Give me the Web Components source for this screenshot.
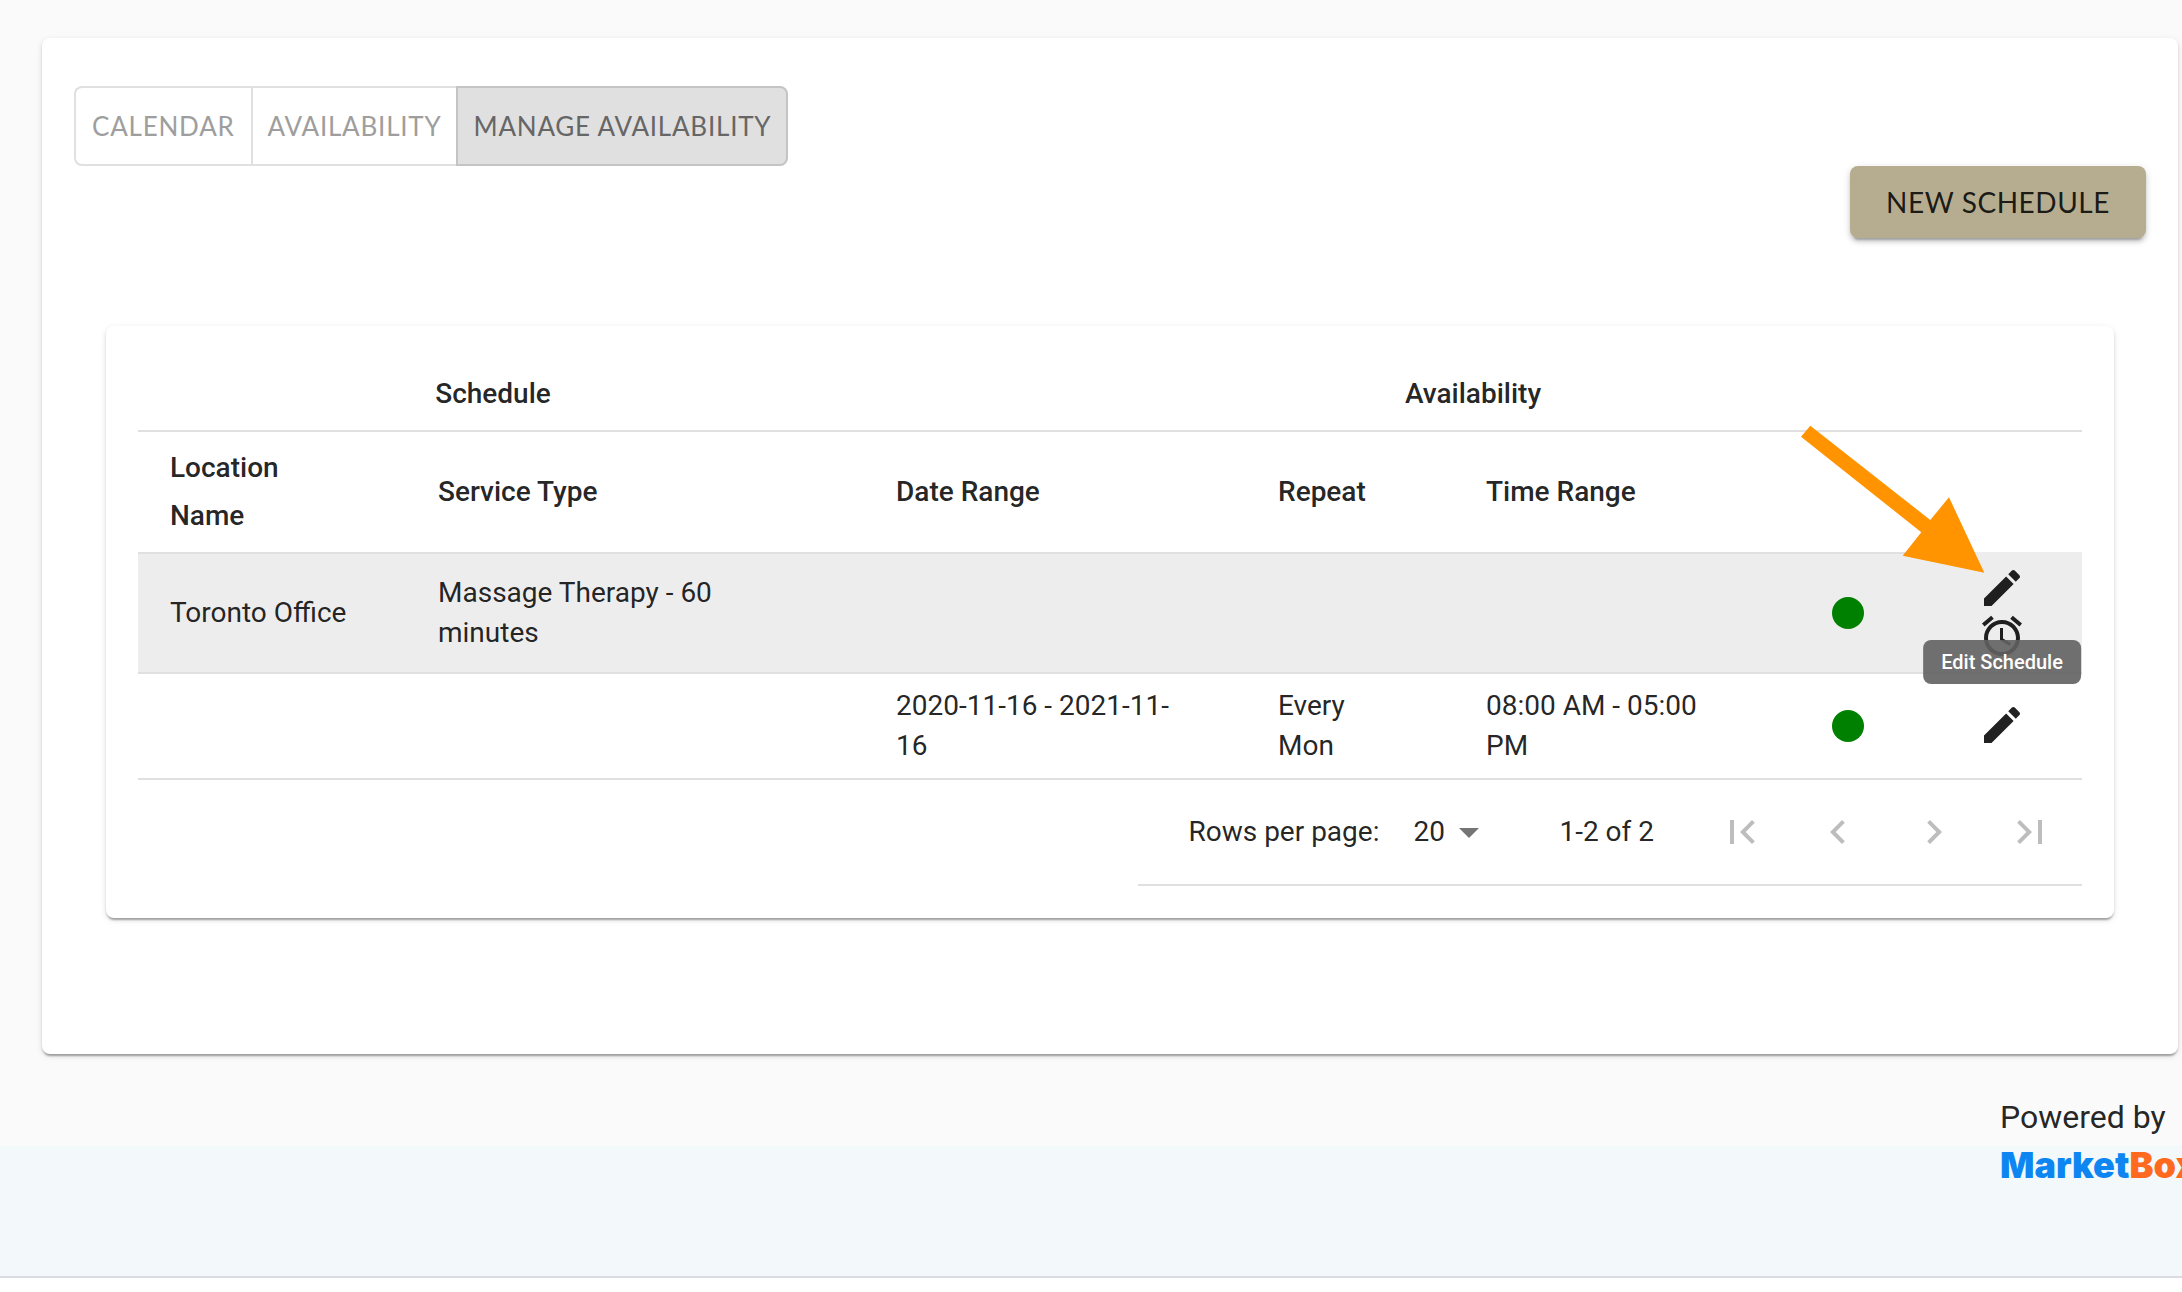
<!DOCTYPE html>
<html lang="en">
<head>
<meta charset="utf-8">
<title>Manage Availability</title>
<style>
  html, body { margin: 0; }
  body {
    min-height: 100vh;
    background: #fff;
    color: rgba(0, 0, 0, 0.87);
    font: 400 28px/40px Roboto, "Liberation Sans", sans-serif;
    overflow-x: hidden;
  }
</style>
</head>
<body>
<schedule-app></schedule-app>

<script>
const define = (name, html, setup) => {
  const template = document.createElement('template');
  template.innerHTML = html;
  customElements.define(name, class extends HTMLElement {
    connectedCallback() {
      if (this.shadowRoot) return;
      const content = template.content.cloneNode(true);
      if (setup) setup.call(this, content);
      this.attachShadow({ mode: 'open' }).append(content);
    }
  });
};

const ICONS = {
  edit: 'M3 17.25V21h3.75L17.81 9.94l-3.75-3.75L3 17.25zM20.71 7.04c.39-.39.39-1.02 0-1.41l-2.34-2.34c-.39-.39-1.02-.39-1.41 0l-1.83 1.83 3.75 3.75 1.83-1.83z',
  alarm: 'M22 5.72l-4.6-3.86-1.29 1.53 4.6 3.86L22 5.72zM7.88 3.39L6.6 1.86 2 5.71l1.29 1.53 4.59-3.85zM12.5 8H11v6l4.75 2.85.75-1.23-4-2.37V8zM12 4c-4.97 0-9 4.03-9 9s4.02 9 9 9c4.97 0 9-4.03 9-9s-4.03-9-9-9zm0 16c-3.87 0-7-3.13-7-7s3.13-7 7-7 7 3.13 7 7-3.13 7-7 7z',
  first: 'M18.41 16.59L13.82 12l4.59-4.59L17 6l-6 6 6 6zM6 6h2v12H6z',
  prev: 'M15.41 7.41L14 6l-6 6 6 6 1.41-1.41L10.83 12z',
  next: 'M10 6L8.59 7.41 13.17 12l-4.58 4.59L10 18l6-6z',
  last: 'M5.59 7.41L10.18 12l-4.59 4.59L7 18l6-6-6-6zM16 6h2v12h-2z',
  drop: 'M7 10l5 5 5-5z'
};

define('app-icon', `
  <style>
    :host { display: block; width: 48px; height: 48px; }
    svg { display: block; width: 100%; height: 100%; fill: currentColor; }
  </style>
  <svg viewBox="0 0 24 24" aria-hidden="true"><path/></svg>
`, function (root) {
  root.querySelector('path').setAttribute('d', ICONS[this.getAttribute('name')]);
});

define('icon-button', `
  <style>
    :host { display: block; }
    button {
      display: block; margin: 0; border: 0; background: none; color: inherit;
      padding: var(--icon-button-padding, 0);
    }
  </style>
  <button type="button"><app-icon></app-icon></button>
`, function (root) {
  root.querySelector('app-icon').setAttribute('name', this.getAttribute('icon'));
  const button = root.querySelector('button');
  button.setAttribute('aria-label', this.getAttribute('label'));
  button.disabled = this.hasAttribute('disabled');
});

define('paper-card', `
  <style>
    :host {
      display: block; padding: 32px; border-radius: 8px; background: #fff;
      box-shadow: 0 4px 2px -2px rgba(0,0,0,.2), 0 2px 2px 0 rgba(0,0,0,.14), 0 2px 6px 0 rgba(0,0,0,.12);
    }
  </style>
  <slot></slot>
`);

define('view-tabs', `
  <style>
    :host { display: flex; }
    slot { display: flex; }
  </style>
  <slot></slot>
`);

define('view-tab', `
  <style>
    :host { display: block; }
    button {
      display: block; height: 80px; margin: 0; padding: 0 15px;
      border: 2px solid #e0e0e0; background: #fff; color: #9e9e9e;
      font: 400 26px/40px Lato, sans-serif; letter-spacing: 0.03em; text-transform: uppercase;
    }
    :host(:not(:last-child)) button { border-right-width: 0; }
    :host(:first-child) button { border-radius: 8px 0 0 8px; padding: 0 16px; }
    :host(:last-child) button { border-radius: 0 8px 8px 0; }
    :host([selected]) button { background: #e0e0e0; border-color: #c4c4c4; color: #666; }
  </style>
  <button type="button"><slot></slot></button>
`, function (root) {
  root.querySelector('button').setAttribute('aria-pressed', this.hasAttribute('selected'));
});

define('raised-button', `
  <style>
    :host { display: block; }
    button {
      display: block; margin: 0; padding: 12px 36px; border: 0; border-radius: 8px;
      background: #b6ad90; color: rgba(0,0,0,.87);
      font: 400 28px/48px Lato, sans-serif; letter-spacing: 0.02em; text-transform: uppercase;
      box-shadow: 0 6px 2px -4px rgba(0,0,0,.2), 0 4px 4px 0 rgba(0,0,0,.14), 0 2px 10px 0 rgba(0,0,0,.12);
    }
  </style>
  <button type="button"><slot></slot></button>
`);

define('status-dot', `
  <style>
    :host { display: block; width: 32px; height: 32px; margin: 0 auto; border-radius: 50%; background: #008000; }
  </style>
`);

define('tool-tip', `
  <style>
    :host {
      display: block; padding: 8px 18px; border-radius: 8px; white-space: nowrap;
      background: rgba(97,97,97,.9); color: #fff; font-size: 20px; line-height: 28px; font-weight: 500;
    }
  </style>
  <slot></slot>
`);

define('pointer-arrow', `
  <style>
    :host { display: block; width: 184px; height: 148px; pointer-events: none; }
    svg { display: block; fill: #ff9400; }
  </style>
  <svg width="184" height="148" viewBox="0 0 184 148" aria-hidden="true">
    <polygon points="9.3,.7 0,11.7 120.3,107.3 101.7,130.7 183.3,147.7 148,72.3 129.3,95"/>
  </svg>
`);

define('schedule-table', `
  <style>
    :host { display: block; }
    table { width: 100%; table-layout: fixed; border-collapse: separate; border-spacing: 0; }
    th, td {
      padding: 12px 48px 12px 32px; border-bottom: 2px solid #e0e0e0;
      text-align: left; vertical-align: middle;
    }
    th { font-weight: 500; line-height: 48px; }
    th.group { text-align: center; }
    th.group:last-child { padding-right: 32px; }
    th.bare { border-color: #ededed; }
    td.actions { padding: 10px 32px 12px; }
    tr.main td { background: #ededed; }
    .stack { position: relative; width: 48px; }
    tool-tip { position: absolute; z-index: 2; top: 76px; left: 50%; transform: translateX(-50%); }
    pointer-arrow { position: absolute; z-index: 1; right: 41px; top: -139px; }
  </style>
  <table>
    <colgroup>
      <col style="width:268px"><col style="width:458px"><col style="width:382px"><col style="width:208px">
      <col style="width:312px"><col style="width:180px"><col style="width:136px">
    </colgroup>
    <thead>
      <tr><th class="group" colspan="2">Schedule</th><th class="group" colspan="5">Availability</th></tr>
      <tr><th>Location Name</th><th>Service Type</th><th>Date Range</th><th>Repeat</th><th>Time Range</th><th></th><th class="bare"></th></tr>
    </thead>
    <tbody>
      <tr class="main">
        <td>Toronto Office</td><td>Massage Therapy - 60 minutes</td><td></td><td></td><td></td>
        <td><status-dot></status-dot></td>
        <td class="actions">
          <div class="stack">
            <icon-button icon="edit" label="Edit Schedule"></icon-button>
            <icon-button icon="alarm" label="Add availability"></icon-button>
            <tool-tip>Edit Schedule</tool-tip>
            <pointer-arrow></pointer-arrow>
          </div>
        </td>
      </tr>
      <tr>
        <td></td><td></td><td>2020-11-16 - 2021-11-16</td><td>Every Mon</td><td>08:00 AM - 05:00 PM</td>
        <td><status-dot></status-dot></td>
        <td class="actions"><icon-button icon="edit" label="Edit availability"></icon-button></td>
      </tr>
    </tbody>
  </table>
`);

define('table-pager', `
  <style>
    :host { display: flex; justify-content: flex-end; }
    .bar {
      display: flex; align-items: center; height: 104px; padding: 0 4px 0 50px;
      border-bottom: 2px solid #e0e0e0;
    }
    .select { position: relative; margin-left: 18px; width: 96px; }
    select {
      display: block; width: 100%; height: 48px; margin: 0; padding: 0 48px 0 16px; border: 0;
      background: none; appearance: none; color: inherit; font: inherit;
    }
    app-icon { position: absolute; right: 0; top: 0; color: rgba(0,0,0,.54); pointer-events: none; }
    .range { margin-left: 66px; }
    .nav { display: flex; margin-left: 40px; color: #bdbdbd; --icon-button-padding: 24px; }
  </style>
  <div class="bar">
    <label for="rows">Rows per page:</label>
    <div class="select">
      <select id="rows"><option>20</option></select>
      <app-icon name="drop"></app-icon>
    </div>
    <span class="range">1-2 of 2</span>
    <div class="nav">
      <icon-button icon="first" label="First page" disabled></icon-button>
      <icon-button icon="prev" label="Previous page" disabled></icon-button>
      <icon-button icon="next" label="Next page" disabled></icon-button>
      <icon-button icon="last" label="Last page" disabled></icon-button>
    </div>
  </div>
`);

define('brand-logo', `
  <style>
    :host { display: block; font: 900 36px/38px Inter, sans-serif; white-space: nowrap; }
    a { color: #0e86f2; text-decoration: none; }
    span { color: #ff6a1f; }
  </style>
  <a href="#">Market<span>Box</span></a>
`);

define('schedule-app', `
  <style>
    :host { display: flex; flex-direction: column; overflow: hidden; }
    main { background: #fafafa; padding: 38px 4px 0 42px; }
    .top { display: flex; flex-direction: column; padding-top: 16px; }
    raised-button { align-self: flex-end; }
    .listing { margin: 88px 32px 104px; }
    .powered { display: block; width: 182px; margin: 0 -4px 0 auto; padding: 40px 0 6px; font-size: 32px; line-height: 46px; }
    footer { height: 130px; background: #f3f8fb; border-bottom: 2px solid #d9dce1; }
    brand-logo { width: 182px; margin-left: auto; }
  </style>
  <main>
    <paper-card>
      <div class="top">
        <view-tabs>
          <view-tab>Calendar</view-tab>
          <view-tab>Availability</view-tab>
          <view-tab selected>Manage Availability</view-tab>
        </view-tabs>
        <raised-button>New Schedule</raised-button>
      </div>
      <paper-card class="listing">
        <schedule-table></schedule-table>
        <table-pager></table-pager>
      </paper-card>
    </paper-card>
    <span class="powered">Powered by</span>
  </main>
  <footer><brand-logo></brand-logo></footer>
`);
</script>
</body>
</html>
